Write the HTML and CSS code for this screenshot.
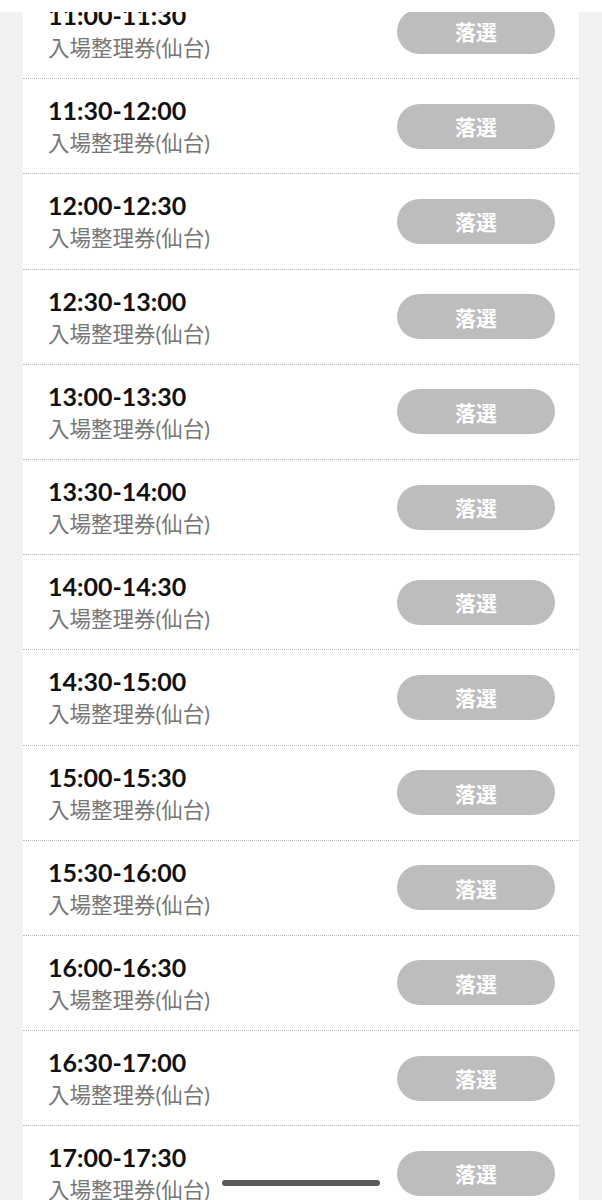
FILE: index.html
```html
<!DOCTYPE html>
<html lang="ja">
<head>
  <meta charset="UTF-8">
  <meta name="viewport" content="width=device-width, initial-scale=1">
  <title>抽選結果</title>
  <link rel="stylesheet" href="styles.css">
</head>
<body>
  <div class="status-strip"></div>

  <div class="ticket-list">
    <div class="ticket-row">
      <div class="ticket-info">
        <div class="ticket-time">11:00-11:30</div>
        <div class="ticket-name">入場整理券(仙台)</div>
      </div>
      <button class="result-btn" disabled>落選</button>
    </div>
    <div class="ticket-row">
      <div class="ticket-info">
        <div class="ticket-time">11:30-12:00</div>
        <div class="ticket-name">入場整理券(仙台)</div>
      </div>
      <button class="result-btn" disabled>落選</button>
    </div>
    <div class="ticket-row">
      <div class="ticket-info">
        <div class="ticket-time">12:00-12:30</div>
        <div class="ticket-name">入場整理券(仙台)</div>
      </div>
      <button class="result-btn" disabled>落選</button>
    </div>
    <div class="ticket-row">
      <div class="ticket-info">
        <div class="ticket-time">12:30-13:00</div>
        <div class="ticket-name">入場整理券(仙台)</div>
      </div>
      <button class="result-btn" disabled>落選</button>
    </div>
    <div class="ticket-row">
      <div class="ticket-info">
        <div class="ticket-time">13:00-13:30</div>
        <div class="ticket-name">入場整理券(仙台)</div>
      </div>
      <button class="result-btn" disabled>落選</button>
    </div>
    <div class="ticket-row">
      <div class="ticket-info">
        <div class="ticket-time">13:30-14:00</div>
        <div class="ticket-name">入場整理券(仙台)</div>
      </div>
      <button class="result-btn" disabled>落選</button>
    </div>
    <div class="ticket-row">
      <div class="ticket-info">
        <div class="ticket-time">14:00-14:30</div>
        <div class="ticket-name">入場整理券(仙台)</div>
      </div>
      <button class="result-btn" disabled>落選</button>
    </div>
    <div class="ticket-row">
      <div class="ticket-info">
        <div class="ticket-time">14:30-15:00</div>
        <div class="ticket-name">入場整理券(仙台)</div>
      </div>
      <button class="result-btn" disabled>落選</button>
    </div>
    <div class="ticket-row">
      <div class="ticket-info">
        <div class="ticket-time">15:00-15:30</div>
        <div class="ticket-name">入場整理券(仙台)</div>
      </div>
      <button class="result-btn" disabled>落選</button>
    </div>
    <div class="ticket-row">
      <div class="ticket-info">
        <div class="ticket-time">15:30-16:00</div>
        <div class="ticket-name">入場整理券(仙台)</div>
      </div>
      <button class="result-btn" disabled>落選</button>
    </div>
    <div class="ticket-row">
      <div class="ticket-info">
        <div class="ticket-time">16:00-16:30</div>
        <div class="ticket-name">入場整理券(仙台)</div>
      </div>
      <button class="result-btn" disabled>落選</button>
    </div>
    <div class="ticket-row">
      <div class="ticket-info">
        <div class="ticket-time">16:30-17:00</div>
        <div class="ticket-name">入場整理券(仙台)</div>
      </div>
      <button class="result-btn" disabled>落選</button>
    </div>
    <div class="ticket-row">
      <div class="ticket-info">
        <div class="ticket-time">17:00-17:30</div>
        <div class="ticket-name">入場整理券(仙台)</div>
      </div>
      <button class="result-btn" disabled>落選</button>
    </div>
  </div>

  <div class="home-bar"></div>
</body>
</html>
```

FILE: styles.css
```css
body {
  margin: 0;
  background: #f2f2f4;
  font-family: Lato, "Noto Sans CJK JP", sans-serif;
  color: #111;
  overflow: hidden;
}
.status-strip {
  position: fixed;
  top: 0;
  left: 0;
  right: 0;
  height: 12px;
  background: white;
  z-index: 2;
}
.ticket-list {
  margin: -16px 23px 0 23px;
  background: white;
}
.ticket-row {
  display: flex;
  align-items: center;
  justify-content: space-between;
  height: 95.2px;
  box-sizing: border-box;
  padding: 0 24px 0 25px;
  border-bottom: 1px dotted #b8b8b8;
}
.ticket-info {
  display: flex;
  flex-direction: column;
  gap: 4px;
}
.ticket-time {
  font-size: 25px;
  font-weight: bold;
  line-height: 30px;
}
.ticket-name {
  font-size: 21.5px;
  line-height: 28px;
  color: #767676;
}
.result-btn {
  width: 158px;
  height: 45px;
  border: none;
  border-radius: 23px;
  background: #bdbdbd;
  color: white;
  font-family: "Noto Sans CJK JP", sans-serif;
  font-size: 21px;
  font-weight: bold;
  padding: 0;
}
.home-bar {
  position: fixed;
  left: 222px;
  bottom: 14px;
  width: 158px;
  height: 6px;
  border-radius: 3px;
  background: #5a5a5a;
}
```
